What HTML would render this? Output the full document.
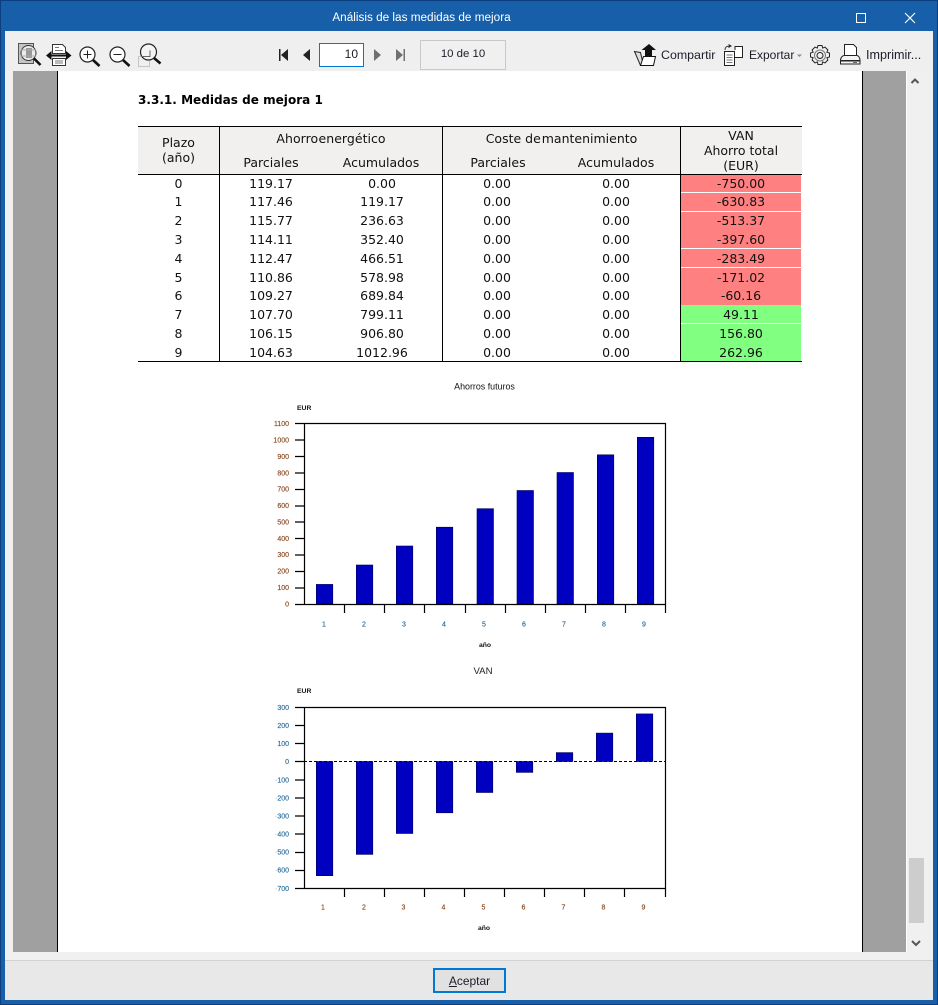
<!DOCTYPE html>
<html lang="es"><head><meta charset="utf-8"><title>Análisis de las medidas de mejora</title>
<style>
html,body{margin:0;padding:0;background:#175fa9}
body{position:relative;width:938px;height:1005px;overflow:hidden;font-family:"Liberation Sans",sans-serif}
.a{position:absolute}
.ui{position:absolute;font-size:12px;line-height:16px;color:#1c1c28;white-space:nowrap}
.t{position:absolute;font-family:"DejaVu Sans",sans-serif;font-size:12.5px;color:#111;text-align:center;white-space:nowrap}
.col{top:174.6px;line-height:18.8px}
svg{position:absolute;left:0;top:0}
</style></head><body>
<div class="a" style="left:0;top:0;width:938px;height:1px;background:#0d3f80"></div>
<div class="a" style="left:0;top:0;width:1px;height:1005px;background:#0d3f80"></div>
<div class="a" style="left:937px;top:0;width:1px;height:1005px;background:#0d3f80"></div>
<div class="a" style="left:0;top:1004px;width:938px;height:1px;background:#0d3f80"></div>
<div class="a" style="left:0;top:10px;width:843px;text-align:center;color:#fff;font-size:11.75px;line-height:16px">Análisis de las medidas de mejora</div>

<div class="a" style="left:5px;top:31px;width:928px;height:40px;background:#efefef"></div>
<div class="a" style="left:5px;top:71px;width:928px;height:881px;background:#f0f0f0"></div>
<div class="a" style="left:13px;top:71px;width:44px;height:881px;background:#a0a0a0"></div>
<div class="a" style="left:57px;top:71px;width:1px;height:881px;background:#000"></div>
<div class="a" style="left:58px;top:71px;width:804px;height:881px;background:#fff"></div>
<div class="a" style="left:862px;top:71px;width:1px;height:881px;background:#000"></div>
<div class="a" style="left:863px;top:71px;width:43px;height:881px;background:#a0a0a0"></div>
<div class="a" style="left:906px;top:71px;width:1px;height:881px;background:#fff"></div>
<div class="a" style="left:909px;top:858px;width:15px;height:65px;background:#cdcdcd"></div>
<div class="a" style="left:5px;top:952px;width:928px;height:8px;background:#f0f0f0"></div>
<div class="a" style="left:5px;top:960px;width:928px;height:1px;background:#d2d2d2"></div>
<div class="a" style="left:5px;top:961px;width:928px;height:39px;background:#e8e8e8"></div>

<div class="a" style="left:319px;top:43px;width:43px;height:22px;border:1px solid #0078d7;background:#fff"></div>
<div class="ui" style="left:320px;top:46px;width:38px;text-align:right">10</div>
<div class="a" style="left:420px;top:40px;width:84px;height:28px;border:1px solid #c8c8c8;background:#f0f0f0"></div>
<div class="ui" style="left:420px;top:46px;width:86px;text-align:center;font-size:11.4px">10 de 10</div>
<div class="ui" style="left:661px;top:47px;font-size:12.4px">Compartir</div>
<div class="ui" style="left:749px;top:47px">Exportar</div>
<div class="ui" style="left:866px;top:47px;font-size:12.6px">Imprimir...</div>

<div class="a" style="left:433px;top:968px;width:69px;height:21px;border:2px solid #0078d7;background:#e1e1e1"></div>
<div class="ui" style="left:433px;top:973px;width:73px;text-align:center"><span style="text-decoration:underline">A</span>ceptar</div>

<!-- table -->
<div class="t" style="left:138px;top:93px;font-weight:bold;font-size:12.05px;line-height:15px;color:#000">3.3.1. Medidas de mejora 1</div>
<div class="a" style="left:138px;top:127px;width:664px;height:47px;background:#f2f0ee"></div>
<div class="a" style="left:681px;top:175px;width:120px;height:130px;background:#ff8080"></div>
<div class="a" style="left:681px;top:305px;width:120px;height:56px;background:#80ff80"></div>
<div class="a" style="left:681px;top:192px;width:120px;height:1px;background:#fff"></div>
<div class="a" style="left:681px;top:211px;width:120px;height:1px;background:#fff"></div>
<div class="a" style="left:681px;top:248px;width:120px;height:1px;background:#fff"></div>
<div class="a" style="left:681px;top:267px;width:120px;height:1px;background:#fff"></div>
<div class="a" style="left:681px;top:323px;width:120px;height:1px;background:#fff"></div>
<div class="a" style="left:138px;top:126px;width:664px;height:1px;background:#000"></div>
<div class="a" style="left:138px;top:174px;width:664px;height:1px;background:#000"></div>
<div class="a" style="left:138px;top:361px;width:664px;height:1px;background:#000"></div>
<div class="a" style="left:219px;top:126px;width:1px;height:235px;background:#000"></div>
<div class="a" style="left:442px;top:126px;width:1px;height:235px;background:#000"></div>
<div class="a" style="left:680px;top:126px;width:1px;height:235px;background:#000"></div>

<div class="t" style="left:138px;top:135px;width:81px;line-height:15px">Plazo<br>(año)</div>
<div class="t" style="left:220px;top:131px;width:222px;line-height:15px;word-spacing:-3.6px;letter-spacing:.03px">Ahorro energético</div>
<div class="t" style="left:443px;top:131px;width:237px;line-height:15px">Coste <span style="word-spacing:-3px">de mantenimiento</span></div>
<div class="t" style="left:681px;top:128px;width:120px;line-height:15px">VAN<br>Ahorro total<br>(EUR)</div>
<div class="t" style="left:221px;top:155px;width:100px;line-height:15px">Parciales</div>
<div class="t" style="left:331px;top:155px;width:100px;line-height:15px">Acumulados</div>
<div class="t" style="left:448px;top:155px;width:100px;line-height:15px">Parciales</div>
<div class="t" style="left:566px;top:155px;width:100px;line-height:15px">Acumulados</div>

<div class="t col" style="left:138px;width:81px">0<br>1<br>2<br>3<br>4<br>5<br>6<br>7<br>8<br>9</div>
<div class="t col" style="left:221px;width:100px">119.17<br>117.46<br>115.77<br>114.11<br>112.47<br>110.86<br>109.27<br>107.70<br>106.15<br>104.63</div>
<div class="t col" style="left:332px;width:100px">0.00<br>119.17<br>236.63<br>352.40<br>466.51<br>578.98<br>689.84<br>799.11<br>906.80<br>1012.96</div>
<div class="t col" style="left:447px;width:100px">0.00<br>0.00<br>0.00<br>0.00<br>0.00<br>0.00<br>0.00<br>0.00<br>0.00<br>0.00</div>
<div class="t col" style="left:566px;width:100px">0.00<br>0.00<br>0.00<br>0.00<br>0.00<br>0.00<br>0.00<br>0.00<br>0.00<br>0.00</div>
<div class="t col" style="left:681px;width:120px">-750.00<br>-630.83<br>-513.37<br>-397.60<br>-283.49<br>-171.02<br>-60.16<br>49.11<br>156.80<br>262.96</div>

<svg width="938" height="1005" viewBox="0 0 938 1005" xmlns="http://www.w3.org/2000/svg" font-family="Liberation Sans, sans-serif">
<!-- window buttons -->
<rect x="856.5" y="13.5" width="9" height="9" fill="none" stroke="#fff"/>
<path d="M905 13l10 10M915 13l-10 10" stroke="#fff" stroke-width="1.2" fill="none"/>

<!-- toolbar left icons -->
<g fill="none" stroke="#111">
 <rect x="18.5" y="43.5" width="15" height="20" fill="#c4c4c4" stroke="#555"/>
 <circle cx="28.500" cy="53" r="7.500" fill="#ececec" stroke="#333"/>
 <rect x="26" y="48" width="6" height="10" fill="#999" stroke="none"/>
 <path d="M21 50h15M21 56h15" stroke="#aaa"/>
 <path d="M34 58.500l6.500 6.500" stroke-width="2.600"/>
 <path d="M52.500 44.500h10l3 3v6h-13zM52.500 58.500h13v7h-13z" fill="#fff" stroke="#333"/>
 <path d="M55 47.500h4M55 50.500h8M55 61h8M55 63h8" stroke="#777"/>
 <path d="M48 55.500h22" stroke-width="2"/>
 <path d="M46 55.500l5.500-4.500v9zM71.500 55.500l-5.500-4.500v9z" fill="#111" stroke="none"/>
 <circle cx="87.500" cy="54.500" r="7.500" fill="#fff" stroke="#222" stroke-width="1.200"/>
 <path d="M83.500 54.500h8M87.500 50.500v8" stroke="#222"/>
 <path d="M93 60l6.500 6" stroke-width="2.600"/>
 <circle cx="117.500" cy="54.500" r="7.500" fill="#fff" stroke="#222" stroke-width="1.200"/>
 <path d="M113.500 54.500h8" stroke="#222"/>
 <path d="M123 60l6.500 6" stroke-width="2.600"/>
 <rect x="138.500" y="56.500" width="11" height="10" stroke="#999" stroke-dasharray="1 1"/>
 <circle cx="148.500" cy="52" r="8" fill="#f4f4f4" stroke="#222" stroke-width="1.200"/>
 <path d="M141 56.500h9v-6" stroke="#666"/>
 <path d="M154 58l6.500 5.500" stroke-width="2.600"/>
</g>
<!-- nav -->
<path d="M279 49h1.500v12H279zM288 49v12l-7-6z" fill="#222"/>
<path d="M310 49v12l-7-6z" fill="#222"/>
<path d="M374 49v12l7-6z" fill="#707070"/>
<path d="M396 49v12l7-6zM403.500 49h1.500v12h-1.500z" fill="#707070"/>

<!-- share -->
<path d="M634.500 51.500l6 1 3 13h-3z" fill="#ddd" stroke="#222"/>
<path d="M640.500 65.500l3-9h12l-2 9z" fill="#fff" stroke="#111"/>
<path d="M649 44l7 6H652v6h-7v-6h-3.500z" fill="#111"/>
<!-- export -->
<path d="M724.500 51.500h10v14h-10z" fill="#fff" stroke="#222"/>
<path d="M726.500 55h6M726.500 57.500h6M726.500 60h6M726.500 62.500h6" stroke="#777"/>
<path d="M735 50v-3.500h3l4.500 0v11H735" fill="#fff" stroke="#222"/>
<path d="M725 50c0-3 1.500-4 5-4M728.500 44.500l2.500 1.500-2.500 1.500" fill="none" stroke="#222"/>
<path d="M797 54.500h5l-2.500 2.500z" fill="#888"/>
<!-- gear -->
<g fill="none" stroke="#222">
 <path d="M818 45.500h4l.7 2.600 2.300-1 2.900 2.900-1 2.300 2.600.7v4l-2.600.7 1 2.300-2.900 2.900-2.300-1-.7 2.600h-4l-.7-2.600-2.300 1-2.900-2.900 1-2.300-2.600-.7v-4l2.600-.7-1-2.300 2.900-2.900 2.300 1z"/>
 <circle cx="820" cy="55.500" r="3"/><circle cx="820" cy="55.500" r="5.500" stroke="#777"/>
</g>
<!-- printer -->
<path d="M844.500 55.500v-11h9l3 3v8" fill="#fff" stroke="#222"/>
<path d="M840.500 60.500c0-3 2-5 4-5h12c2 0 3.500 2 3.500 5v3.500h-19.500z" fill="#f4f4f4" stroke="#222"/>
<rect x="841" y="60" width="19" height="1.500" fill="#222"/>
<rect x="853" y="62" width="4" height="1" fill="#666"/>

<!-- scrollbar arrows -->
<path d="M911.500 83l3.500-3.500 3.500 3.500" fill="none" stroke="#555" stroke-width="2"/>
<path d="M912 941l4 4 4-4" fill="none" stroke="#555" stroke-width="2"/>

<!-- Chart 1 -->
<text x="484.500" y="389.500" font-size="8.900" text-anchor="middle" fill="#111">Ahorros futuros</text>
<text x="297" y="410" font-size="6.800" font-weight="bold" fill="#111">EUR</text>
<g fill="#0000c0" stroke="#000060" stroke-width=".6">
<rect x="316.300" y="584.400" width="16.500" height="19.600"/>
<rect x="356.300" y="565" width="16.500" height="39"/>
<rect x="396.300" y="546" width="16.500" height="58"/>
<rect x="436.300" y="527.200" width="16.500" height="76.800"/>
<rect x="477" y="508.700" width="16.500" height="95.300"/>
<rect x="517" y="490.500" width="16.500" height="113.500"/>
<rect x="557" y="472.500" width="16.500" height="131.500"/>
<rect x="597.300" y="454.800" width="16.500" height="149.200"/>
<rect x="637.300" y="437.300" width="16.500" height="166.700"/>
</g>
<path d="M295 423.500h370.500V604.500M304.500 423.500V604.500M295 604.500h370.500M295 440h9M295 456.500h9M295 473h9M295 489.500h9M295 506h9M295 522h9M295 538.500h9M295 555h9M295 571.500h9M295 588h9M344.500 604v9M384.500 604v9M424.500 604v9M465.500 604v9M505.500 604v9M545.500 604v9M585.500 604v9M625.500 604v9M665.500 604v9" fill="none" stroke="#000" stroke-width="1.200"/>
<g font-size="7" text-anchor="end" fill="#8a4a20" stroke="#8a4a20" stroke-width=".15">
<text x="289" y="426">1100</text><text x="289" y="442.500">1000</text><text x="289" y="459">900</text><text x="289" y="475.500">800</text><text x="289" y="491.500">700</text><text x="289" y="508">600</text><text x="289" y="524.500">500</text><text x="289" y="541">400</text><text x="289" y="557">300</text><text x="289" y="573.500">200</text><text x="289" y="590">100</text><text x="289" y="606.500">0</text>
</g>
<g font-size="7" text-anchor="middle" fill="#2a6f9e" stroke="#2a6f9e" stroke-width=".15">
<text x="324" y="626.500">1</text><text x="364" y="626.500">2</text><text x="404" y="626.500">3</text><text x="444" y="626.500">4</text><text x="484" y="626.500">5</text><text x="524" y="626.500">6</text><text x="564" y="626.500">7</text><text x="604" y="626.500">8</text><text x="644" y="626.500">9</text>
</g>
<text x="485" y="647" font-size="6.800" font-weight="bold" text-anchor="middle" fill="#111">año</text>

<!-- Chart 2 -->
<text x="483" y="674" font-size="9.600" text-anchor="middle" fill="#222">VAN</text>
<text x="297" y="693" font-size="6.800" font-weight="bold" fill="#111">EUR</text>
<g fill="#0000c0" stroke="#000060" stroke-width=".6">
<rect x="316.300" y="761.500" width="16.500" height="114.200"/>
<rect x="356.300" y="761.500" width="16.500" height="92.900"/>
<rect x="396.300" y="761.500" width="16.500" height="72"/>
<rect x="436.300" y="761.500" width="16.500" height="51.300"/>
<rect x="476.300" y="761.500" width="16.500" height="31"/>
<rect x="516.300" y="761.500" width="16.500" height="10.900"/>
<rect x="556.300" y="752.600" width="16.500" height="8.900"/>
<rect x="596.300" y="733.100" width="16.500" height="28.400"/>
<rect x="636.300" y="713.900" width="16.500" height="47.600"/>
</g>
<path d="M304 761.500h361" stroke="#000" stroke-dasharray="3 2" fill="none"/>
<path d="M295 707.500h370.500V888.500M304.500 707.500V888.500M295 888.500h370.500M295 725.500h9M295 743.500h9M295 761.500h9M295 780h9M295 798h9M295 816h9M295 834h9M295 852.500h9M295 870.500h9M344.500 888v9M384.500 888v9M424.500 888v9M464.500 888v9M504.500 888v9M544.500 888v9M584.500 888v9M624.500 888v9M665.500 888v9" fill="none" stroke="#000" stroke-width="1.200"/>
<g font-size="7" text-anchor="end" fill="#2a6f9e" stroke="#2a6f9e" stroke-width=".15">
<text x="289" y="710">300</text><text x="289" y="728">200</text><text x="289" y="746">100</text><text x="289" y="764">0</text><text x="289" y="782.500"><tspan opacity=".25">-</tspan>100</text><text x="289" y="800.500"><tspan opacity=".25">-</tspan>200</text><text x="289" y="818.500"><tspan opacity=".25">-</tspan>300</text><text x="289" y="836.500"><tspan opacity=".25">-</tspan>400</text><text x="289" y="854.500"><tspan opacity=".25">-</tspan>500</text><text x="289" y="872.500"><tspan opacity=".25">-</tspan>600</text><text x="289" y="891"><tspan opacity=".25">-</tspan>700</text>
</g>
<g font-size="7" text-anchor="middle" fill="#8a4a20" stroke="#8a4a20" stroke-width=".15">
<text x="323" y="909.500">1</text><text x="364" y="909.500">2</text><text x="403.500" y="909.500">3</text><text x="443.500" y="909.500">4</text><text x="483.500" y="909.500">5</text><text x="523.500" y="909.500">6</text><text x="563.500" y="909.500">7</text><text x="603.500" y="909.500">8</text><text x="643.500" y="909.500">9</text>
</g>
<text x="484" y="930" font-size="6.800" font-weight="bold" text-anchor="middle" fill="#111">año</text>
</svg>
</body></html>
